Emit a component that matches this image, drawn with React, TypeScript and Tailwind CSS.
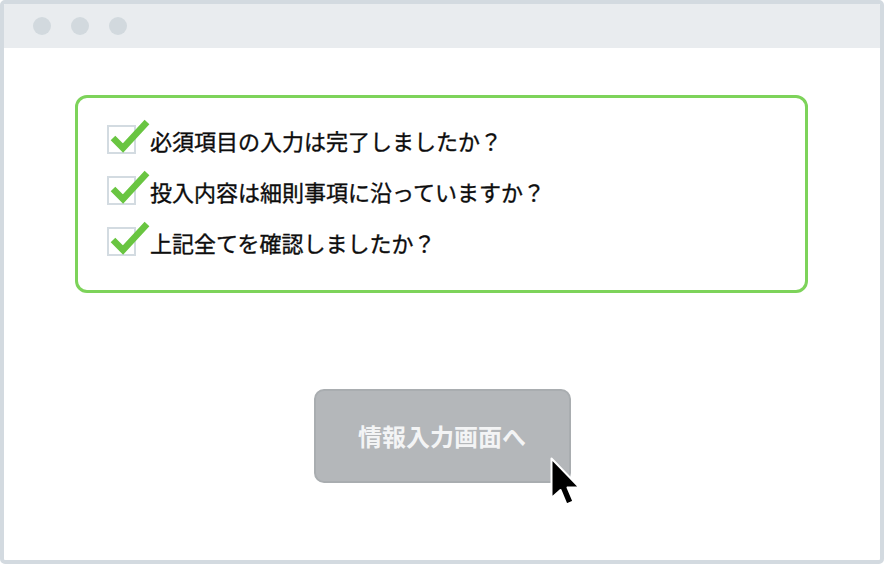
const items = [
  '必須項目の入力は完了しましたか？',
  '投入内容は細則事項に沿っていますか？',
  '上記全てを確認しましたか？',
]

function CheckRow({ label }: { label: string }) {
  return (
    <div className="flex items-center h-[51px]">
      <div className="relative w-[29px] h-[29px] border-2 border-[#d3dbe1] bg-white shrink-0">
        <svg
          className="absolute left-[-2px] top-[-11px] overflow-visible"
          width="44"
          height="40"
          viewBox="0 0 44 40"
        >
          <path
            d="M6 22 L16 32 L40 6"
            fill="none"
            stroke="#69c541"
            strokeWidth="6.5"
            strokeLinejoin="miter"
          />
        </svg>
      </div>
      <span className="ml-[14px] text-[22px] leading-none text-[#0d0d0d] font-normal [-webkit-text-stroke:0.35px_#0d0d0d]">
        {label}
      </span>
    </div>
  )
}

export default function App() {
  return (
    <div
      className="w-[884px] h-[564px] bg-white border-4 border-[#d3dae0] rounded-[5px] flex flex-col overflow-hidden"
      style={{ fontFamily: '"Noto Sans CJK JP", "Noto Sans", sans-serif' }}
    >
      {/* Window title bar */}
      <div className="h-[44px] bg-[#e9ecef] flex items-center pl-[29px] gap-[20px] shrink-0">
        <div className="w-[18px] h-[18px] rounded-full bg-[#d2d9de]" />
        <div className="w-[18px] h-[18px] rounded-full bg-[#d2d9de]" />
        <div className="w-[18px] h-[18px] rounded-full bg-[#d2d9de]" />
      </div>

      {/* Checklist */}
      <div className="mt-[47px] ml-[71px] w-[733px] h-[198px] border-[3px] border-[#7dd35a] rounded-[12px] pt-[16px] pl-[29px]">
        {items.map((t) => (
          <CheckRow key={t} label={t} />
        ))}
      </div>

      {/* Button */}
      <div className="flex justify-center mt-[96px]">
        <div className="relative w-[257px] h-[94px] rounded-[10px] bg-[#b4b7ba] border-2 border-[#a9adb0] flex items-center justify-center">
          <span className="text-[24px] font-bold text-[#f3f4f5]">情報入力画面へ</span>
          <svg
            className="absolute left-[234px] top-[66px]"
            width="34"
            height="50"
            viewBox="0 0 34 50"
          >
            <path
              d="M1.5 1.5 L1.5 41 L10.5 33 L16.5 47.5 L23.5 44.5 L17.5 30.5 L29.5 30.5 Z"
              fill="#000"
              stroke="#fff"
              strokeWidth="2"
              strokeLinejoin="round"
            />
          </svg>
        </div>
      </div>
    </div>
  )
}
